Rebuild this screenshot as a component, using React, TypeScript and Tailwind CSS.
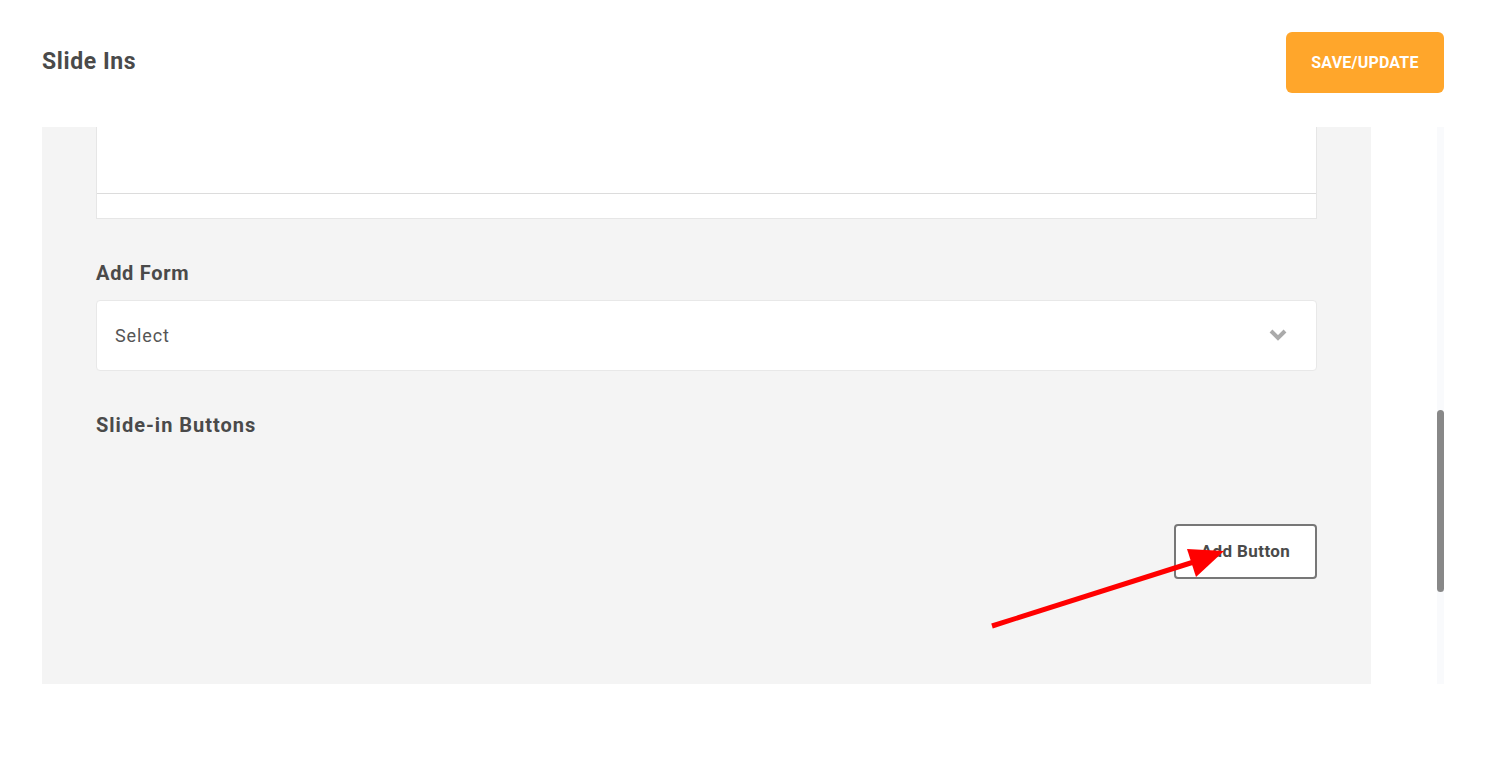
export default function App() {
  return (
    <div className="relative h-[757px] w-[1493px] bg-white font-['Roboto',sans-serif] text-[#4a4a4a]">
      {/* header */}
      <div className="flex h-[127px] items-start justify-between pl-[42px] pr-[49px] pt-[32px]">
        <h1 className="mt-[13px] text-[23px] font-bold tracking-[0.6px]">Slide Ins</h1>
        <button className="h-[61px] w-[158px] rounded-[6px] bg-[#ffa62b] text-[16px] font-bold tracking-[0.2px] text-white">
          SAVE/UPDATE
        </button>
      </div>

      <div className="flex h-[557px] pl-[42px] pr-[49px]">
        {/* panel */}
        <div className="w-[1329px] bg-[#f4f4f4] pl-[54px] pr-[54px]">
          <div className="border-x border-b border-[#e6e6e6] bg-white">
            <div className="h-[67px] border-b border-[#dcdcdc]" />
            <div className="h-[24px]" />
          </div>

          <div className="mt-[42px] text-[20px] font-bold leading-[24px] tracking-[0.7px]">Add Form</div>
          <div className="mt-[15px] flex h-[71px] items-center justify-between rounded-[4px] border border-[#e8e8e8] bg-white pl-[18px] pr-[29px]">
            <span className="text-[18px] tracking-[0.9px] text-[#555]">Select</span>
            <svg width="18" height="12" viewBox="0 0 18 12" className="mt-[-2px]">
              <polyline points="2,2 9,9 16,2" fill="none" stroke="#aaa" strokeWidth="4" strokeLinejoin="miter" />
            </svg>
          </div>

          <div className="mt-[42px] text-[20px] font-bold leading-[24px] tracking-[1px]">Slide-in Buttons</div>
          <div className="mt-[87px] flex justify-end">
            <button className="h-[55px] w-[143px] rounded-[4px] border-2 border-[#777] bg-white text-[17px] font-bold tracking-[0.4px]">
              Add Button
            </button>
          </div>
        </div>

        <div className="flex-1" />

        {/* scrollbar */}
        <div className="w-[7px] bg-[#f9fafc] pt-[283px]">
          <div className="h-[182px] rounded-full bg-[#888]" />
        </div>
      </div>

      {/* annotation arrow */}
      <svg className="absolute left-0 top-0" width="1493" height="757">
        <line x1="992" y1="626" x2="1200" y2="560" stroke="#ff0000" strokeWidth="5" />
        <polygon points="1224,551 1187,549 1196,577" fill="#ff0000" />
      </svg>
    </div>
  );
}
